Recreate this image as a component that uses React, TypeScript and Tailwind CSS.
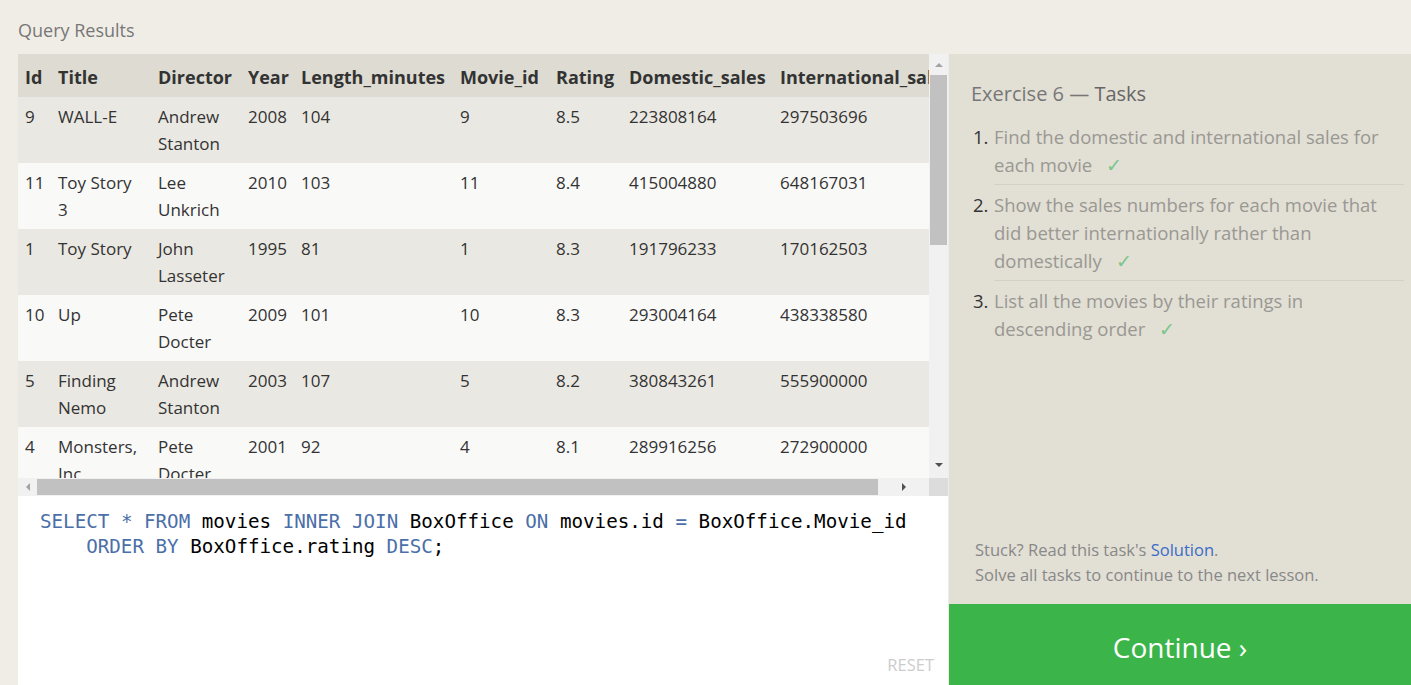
import React from "react";

type Row = string[];

const columns = [
  { name: "Id", w: 33 },
  { name: "Title", w: 100 },
  { name: "Director", w: 90 },
  { name: "Year", w: 53 },
  { name: "Length_minutes", w: 159 },
  { name: "Movie_id", w: 96 },
  { name: "Rating", w: 73 },
  { name: "Domestic_sales", w: 151 },
  { name: "International_sales", w: 190 },
];

const rows: Row[] = [
  ["9", "WALL-E", "Andrew\nStanton", "2008", "104", "9", "8.5", "223808164", "297503696"],
  ["11", "Toy Story\n3", "Lee\nUnkrich", "2010", "103", "11", "8.4", "415004880", "648167031"],
  ["1", "Toy Story", "John\nLasseter", "1995", "81", "1", "8.3", "191796233", "170162503"],
  ["10", "Up", "Pete\nDocter", "2009", "101", "10", "8.3", "293004164", "438338580"],
  ["5", "Finding\nNemo", "Andrew\nStanton", "2003", "107", "5", "8.2", "380843261", "555900000"],
  ["4", "Monsters,\nInc.", "Pete\nDocter", "2001", "92", "4", "8.1", "289916256", "272900000"],
];

const tasks = [
  "Find the domestic and international sales for\neach movie",
  "Show the sales numbers for each movie that\ndid better internationally rather than\ndomestically",
  "List all the movies by their ratings in\ndescending order",
];

function ResultsTable() {
  return (
    <div className="flex-1 overflow-hidden bg-[#f9f9f8]">
      <table className="table-fixed border-collapse text-[#333] text-[17px] leading-[27px]" style={{ width: 945 }}>
        <colgroup>
          {columns.map((c) => (
            <col key={c.name} style={{ width: c.w }} />
          ))}
        </colgroup>
        <thead>
          <tr className="bg-[#dddbd2] h-[43px]">
            {columns.map((c) => (
              <th key={c.name} className="text-left font-bold text-[18px] pl-[7px] pt-[3px] whitespace-nowrap overflow-hidden">
                {c.name}
              </th>
            ))}
          </tr>
        </thead>
        <tbody>
          {rows.map((r, i) => (
            <tr key={i} className={i % 2 === 0 ? "bg-[#eae8e2]" : "bg-[#f9f9f8]"}>
              {r.map((v, j) => (
                <td key={j} className="align-top pl-[7px] pt-[6px] pb-[6px] h-[66px] whitespace-pre-line">
                  {v}
                </td>
              ))}
            </tr>
          ))}
        </tbody>
      </table>
    </div>
  );
}

function VScroll() {
  return (
    <div className="w-[19px] bg-[#f1f1f1] flex flex-col items-center">
      <div className="h-[21px] flex items-center justify-center">
        <div className="w-0 h-0 border-l-[4px] border-r-[4px] border-b-[4px] border-l-transparent border-r-transparent border-b-[#a3a3a3]" />
      </div>
      <div className="w-[17px] h-[170px] bg-[#c1c1c1]" />
      <div className="flex-1" />
      <div className="h-[24px] flex items-center justify-center pb-[3px]">
        <div className="w-0 h-0 border-l-[4px] border-r-[4px] border-t-[4px] border-l-transparent border-r-transparent border-t-[#505050]" />
      </div>
    </div>
  );
}

function HScroll() {
  return (
    <div className="h-[18px] flex">
      <div className="flex-1 bg-[#f1f1f1] flex items-center">
        <div className="w-[19px] flex justify-center">
          <div className="w-0 h-0 border-t-[4px] border-b-[4px] border-r-[4px] border-t-transparent border-b-transparent border-r-[#a3a3a3]" />
        </div>
        <div className="w-[841px] h-[16px] bg-[#c1c1c1]" />
        <div className="flex-1 flex justify-center">
          <div className="w-0 h-0 border-t-[4px] border-b-[4px] border-l-[4px] border-t-transparent border-b-transparent border-l-[#505050]" />
        </div>
      </div>
      <div className="w-[19px] bg-[#dcdcdc]" />
    </div>
  );
}

function Editor() {
  const kw = "text-[#4b6fa8]";
  return (
    <div className="relative flex-1 bg-white pt-[13px] pl-[22px]">
      <pre className="font-['DejaVu_Sans_Mono',monospace] text-[19.2px] leading-[25px] text-black">
        <span className={kw}>SELECT</span> <span className={kw}>*</span> <span className={kw}>FROM</span> movies{" "}
        <span className={kw}>INNER</span> <span className={kw}>JOIN</span> BoxOffice <span className={kw}>ON</span>{" "}
        movies.id <span className={kw}>=</span> BoxOffice.Movie_id
        {"\n    "}
        <span className={kw}>ORDER</span> <span className={kw}>BY</span> BoxOffice.rating{" "}
        <span className={kw}>DESC</span>;
      </pre>
      <div className="absolute right-[14px] bottom-[7px] text-[16.5px] text-[#cccccc]">RESET</div>
    </div>
  );
}

function TaskPanel() {
  return (
    <div className="w-[462px] flex flex-col bg-[#e2dfd5]">
      <div className="flex-1 flex flex-col pl-[22px] pr-[7px] pt-[26px]">
        <h2 className="text-[20px] leading-[28px] text-[#777]">
          Exercise 6 — <span className="text-[#666]">Tasks</span>
        </h2>
        <ol className="mt-[15px]">
          {tasks.map((t, i) => (
            <li key={i} className="flex text-[18.5px] leading-[28px]">
              <span className="w-[23px] pl-[2px] text-[#333]">{i + 1}.</span>
              <div
                className={
                  "flex-1 whitespace-pre-line text-[#999892] " +
                  (i < tasks.length - 1 ? "border-b border-[#d3d0c6] pb-[5px] mb-[6px]" : "")
                }
              >
                {t}
                <span className="ml-[14px] text-[#79c688]">✓</span>
              </div>
            </li>
          ))}
        </ol>
        <div className="flex-1" />
        <div className="pl-[4px] pb-[17px] text-[16.5px] leading-[25px] text-[#888]">
          Stuck? Read this task's <span className="text-[#3b6cc7]">Solution</span>.
          <br />
          Solve all tasks to continue to the next lesson.
        </div>
      </div>
      <div className="h-[81px] bg-[#3bb54a] flex items-center justify-center text-white text-[28px] pt-[4px]">
        Continue ›
      </div>
    </div>
  );
}

export default function App() {
  return (
    <div className="w-[1411px] h-[685px] overflow-hidden bg-[#f0ede6] flex flex-col font-['Open_Sans',sans-serif]">
      <div className="h-[54px] pl-[18px] pt-[16px] text-[18px] leading-[28px] text-[#777]">Query Results</div>
      <div className="flex-1 flex min-h-0">
        <div className="w-[930px] ml-[18px] flex flex-col">
          <div className="h-[424px] flex">
            <ResultsTable />
            <VScroll />
          </div>
          <HScroll />
          <Editor />
        </div>
        <div className="w-[1px]" />
        <TaskPanel />
      </div>
    </div>
  );
}
